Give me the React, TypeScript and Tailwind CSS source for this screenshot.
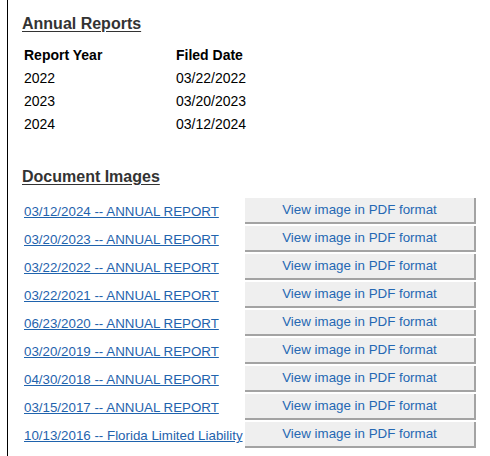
import React from "react";

const reports = [
  ["2022", "03/22/2022"],
  ["2023", "03/20/2023"],
  ["2024", "03/12/2024"],
];

const docs = [
  "03/12/2024 -- ANNUAL REPORT",
  "03/20/2023 -- ANNUAL REPORT",
  "03/22/2022 -- ANNUAL REPORT",
  "03/22/2021 -- ANNUAL REPORT",
  "06/23/2020 -- ANNUAL REPORT",
  "03/20/2019 -- ANNUAL REPORT",
  "04/30/2018 -- ANNUAL REPORT",
  "03/15/2017 -- ANNUAL REPORT",
  "10/13/2016 -- Florida Limited Liability",
];

export default function App() {
  return (
    <div
      className="w-[490px] h-[456px] bg-white overflow-hidden"
      style={{ fontFamily: '"Liberation Sans", Arial, sans-serif' }}
    >
      <div className="ml-[7px] border-l border-black h-full pl-[14px] pt-[15px]">
        <h2 className="text-[16px] leading-[18px] font-bold text-[#333] underline underline-offset-[2px]">
          Annual Reports
        </h2>
        <div className="mt-[11px] text-[14px] text-black">
          <div className="flex h-[23px] items-center font-bold">
            <div className="w-[154px] pl-[2px]">Report Year</div>
            <div>Filed Date</div>
          </div>
          {reports.map(([y, d]) => (
            <div key={y} className="flex h-[23px] items-center">
              <div className="w-[154px] pl-[2px]">{y}</div>
              <div>{d}</div>
            </div>
          ))}
        </div>
        <h2 className="mt-[32px] text-[16px] leading-[18px] font-bold text-[#333] underline underline-offset-[2px]">
          Document Images
        </h2>
        <div className="mt-[11px]">
          {docs.map((d) => (
            <div key={d} className="flex h-[28px] items-center">
              <div className="w-[223px] pl-[2px] whitespace-nowrap">
                <a
                  href="#"
                  className="text-[13.33px] text-[#1f63ad] underline underline-offset-[1px]"
                >
                  {d}
                </a>
              </div>
              <div className="w-[231px] h-[26px] bg-[#efefef] border-r-2 border-b-2 border-[#a3a3a3] flex items-center justify-center text-[13.33px] text-[#2568b3]">
                View image in PDF format
              </div>
            </div>
          ))}
        </div>
      </div>
    </div>
  );
}
